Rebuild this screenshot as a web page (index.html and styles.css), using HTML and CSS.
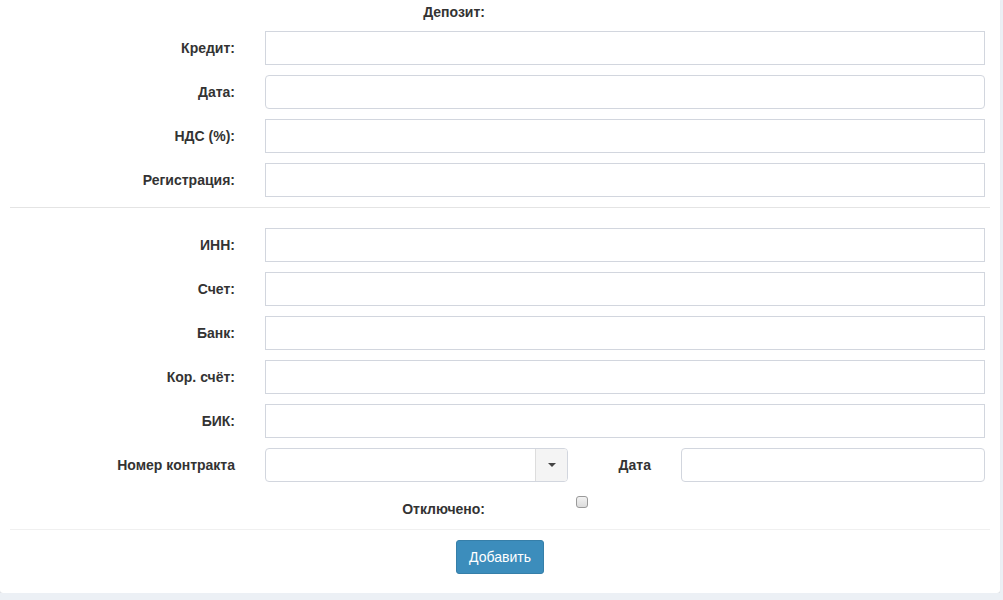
FILE: index.html
```html
<!DOCTYPE html>
<html lang="ru">
<head>
    <meta charset="UTF-8">
    <meta name="viewport" content="width=device-width, initial-scale=1.0">
    <title>Добавить</title>
    <link rel="stylesheet" href="styles.css">
</head>
<body>
    <div class="box">
        <form class="form-horizontal">
            <div class="form-group half top-row">
                <label class="half-label">Депозит:</label>
            </div>
            <div class="form-group">
                <label for="credit">Кредит:</label>
                <input type="text" id="credit" class="form-control">
            </div>
            <div class="form-group">
                <label for="date">Дата:</label>
                <input type="text" id="date" class="form-control rounded">
            </div>
            <div class="form-group">
                <label for="vat">НДС (%):</label>
                <input type="text" id="vat" class="form-control">
            </div>
            <div class="form-group">
                <label for="reg">Регистрация:</label>
                <input type="text" id="reg" class="form-control">
            </div>

            <hr class="divider">

            <div class="form-group">
                <label for="inn">ИНН:</label>
                <input type="text" id="inn" class="form-control">
            </div>
            <div class="form-group">
                <label for="account">Счет:</label>
                <input type="text" id="account" class="form-control">
            </div>
            <div class="form-group">
                <label for="bank">Банк:</label>
                <input type="text" id="bank" class="form-control">
            </div>
            <div class="form-group">
                <label for="corr">Кор. счёт:</label>
                <input type="text" id="corr" class="form-control">
            </div>
            <div class="form-group">
                <label for="bik">БИК:</label>
                <input type="text" id="bik" class="form-control">
            </div>
            <div class="form-group">
                <label>Номер контракта</label>
                <div class="select-group">
                    <span class="select-value"></span>
                    <span class="select-btn"><span class="caret"></span></span>
                </div>
                <label for="contract-date" class="inline-label">Дата</label>
                <input type="text" id="contract-date" class="form-control rounded">
            </div>
            <div class="form-group half check-row">
                <label class="half-label" for="disabled">Отключено:</label>
                <input type="checkbox" id="disabled" class="check">
            </div>

            <hr class="divider tight">

            <div class="form-actions">
                <button type="button" class="btn-primary">Добавить</button>
            </div>
        </form>
    </div>
</body>
</html>
```

FILE: styles.css
```css
* {
    box-sizing: border-box;
}

body {
    margin: 0;
    background-color: #ecf0f5;
    font-family: "Liberation Sans", Arial, sans-serif;
    font-size: 14px;
    color: #333;
}

.box {
    width: 1000px;
    background: #fff;
    border-radius: 0 0 3px 3px;
    box-shadow: 0 1px 1px rgba(0, 0, 0, 0.1);
    padding: 2px 0 19px;
}

.form-horizontal {
    margin: 0;
}

.form-group {
    display: flex;
    margin-bottom: 10px;
}

.form-group label {
    flex: none;
    width: 265px;
    padding: 7px 30px 0 0;
    line-height: 20px;
    text-align: right;
    font-weight: bold;
}

.form-group .half-label {
    width: 500px;
    padding-right: 15px;
}

.top-row {
    margin-bottom: 9px;
}

.top-row .half-label {
    padding-top: 0;
}

.form-control {
    flex: 1;
    height: 34px;
    margin: 0 15px 0 0;
    padding: 6px 12px;
    border: 1px solid #d2d6de;
    border-radius: 0;
    font: inherit;
    color: #555;
    background: #fff;
}

.form-control.rounded {
    border-radius: 4px;
}

.select-group {
    flex: none;
    display: flex;
    width: 303px;
    height: 34px;
    border: 1px solid #d2d6de;
    border-radius: 4px;
    overflow: hidden;
}

.select-value {
    flex: 1;
}

.select-btn {
    width: 32px;
    display: flex;
    justify-content: center;
    align-items: center;
    background: #f4f4f4;
    border-left: 1px solid #ddd;
}

.caret {
    width: 0;
    height: 0;
    border-top: 4px solid #444;
    border-left: 4px solid transparent;
    border-right: 4px solid transparent;
}

.form-group .inline-label {
    width: 113px;
}

.check {
    appearance: none;
    -webkit-appearance: none;
    width: 12px;
    height: 12px;
    margin: 4px 0 0 76px;
    border: 1px solid #9a9a9a;
    border-radius: 3px;
    background: linear-gradient(#f2f2f2, #dcdcdc);
}

.divider {
    border: 0;
    border-top: 1px solid #e4e4e4;
    margin: 0 10px 20px;
}

.divider.tight {
    border-top-color: #f0f0f0;
    margin-bottom: 10px;
}

.form-actions {
    display: flex;
    justify-content: center;
}

.btn-primary {
    background-color: #3c8dbc;
    border: 1px solid #367fa9;
    border-radius: 3px;
    color: #fff;
    padding: 6px 12px;
    font: inherit;
    line-height: 20px;
    cursor: pointer;
}

.btn-primary:hover {
    background-color: #367fa9;
}
```
